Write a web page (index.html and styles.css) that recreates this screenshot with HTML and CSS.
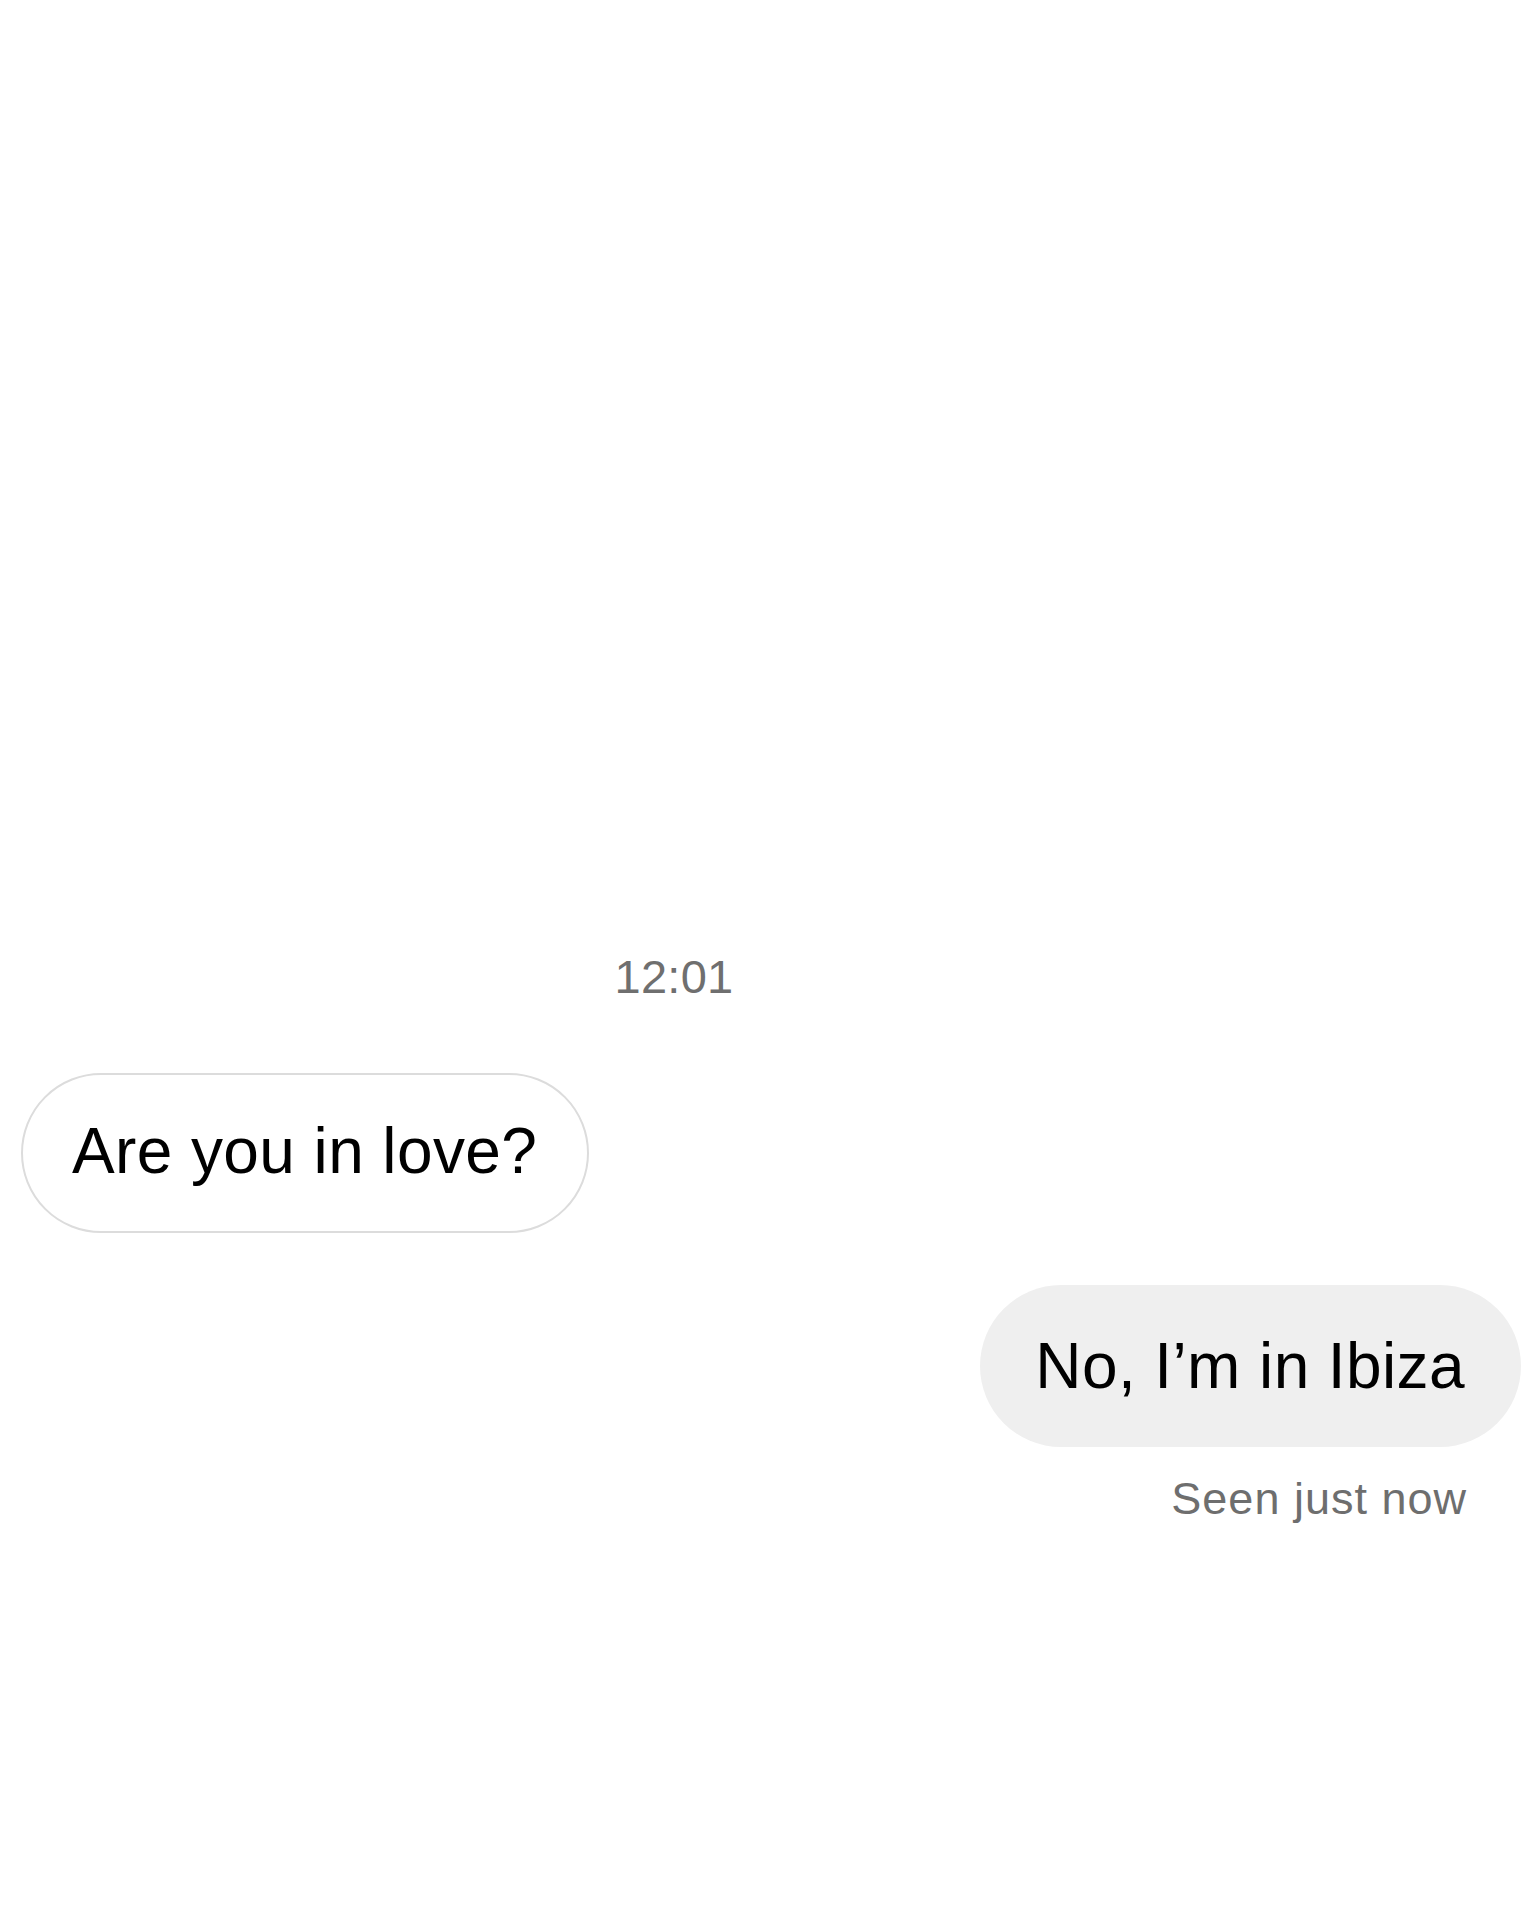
FILE: index.html
```html
<!DOCTYPE html>
<html lang="en">
<head>
    <meta charset="UTF-8">
    <meta name="viewport" content="width=device-width, initial-scale=1.0">
    <title>Chat</title>
    <link rel="stylesheet" href="styles.css">
</head>
<body>
    <div class="chat">
        <div class="time">12:01</div>

        <div class="row row-in">
            <div class="bubble bubble-in">Are you in love?</div>
        </div>

        <div class="row row-out">
            <div class="bubble bubble-out">No, I’m in Ibiza</div>
        </div>
        <div class="seen">Seen just now</div>
    </div>
</body>
</html>
```

FILE: styles.css
```css
body {
    margin: 0;
    background-color: #fff;
    font-family: "Liberation Sans", Arial, sans-serif;
    color: #000;
}
.chat {
    padding: 949px 15px 0 21px;
    min-height: 1920px;
    box-sizing: border-box;
}
.time {
    font-size: 47px;
    line-height: 56px;
    letter-spacing: 0.3px;
    color: #6f6f6f;
    text-align: center;
    padding-right: 194px;
}
.row {
    display: flex;
}
.row-in {
    justify-content: flex-start;
    margin-top: 68px;
}
.row-out {
    justify-content: flex-end;
    margin-top: 52px;
}
.bubble {
    font-size: 64px;
    line-height: 76px;
    letter-spacing: 0.4px;
    border-radius: 82px;
    white-space: nowrap;
}
.bubble-in {
    border: 2px solid #dcdcdc;
    padding: 38px 50px 42px 49px;
}
.bubble-out {
    background-color: #efefef;
    padding: 43px 56px 43px 55px;
}
.seen {
    margin-top: 25px;
    margin-right: 54px;
    text-align: right;
    font-size: 45px;
    line-height: 54px;
    letter-spacing: 1px;
    color: #6e6e6e;
}
```
